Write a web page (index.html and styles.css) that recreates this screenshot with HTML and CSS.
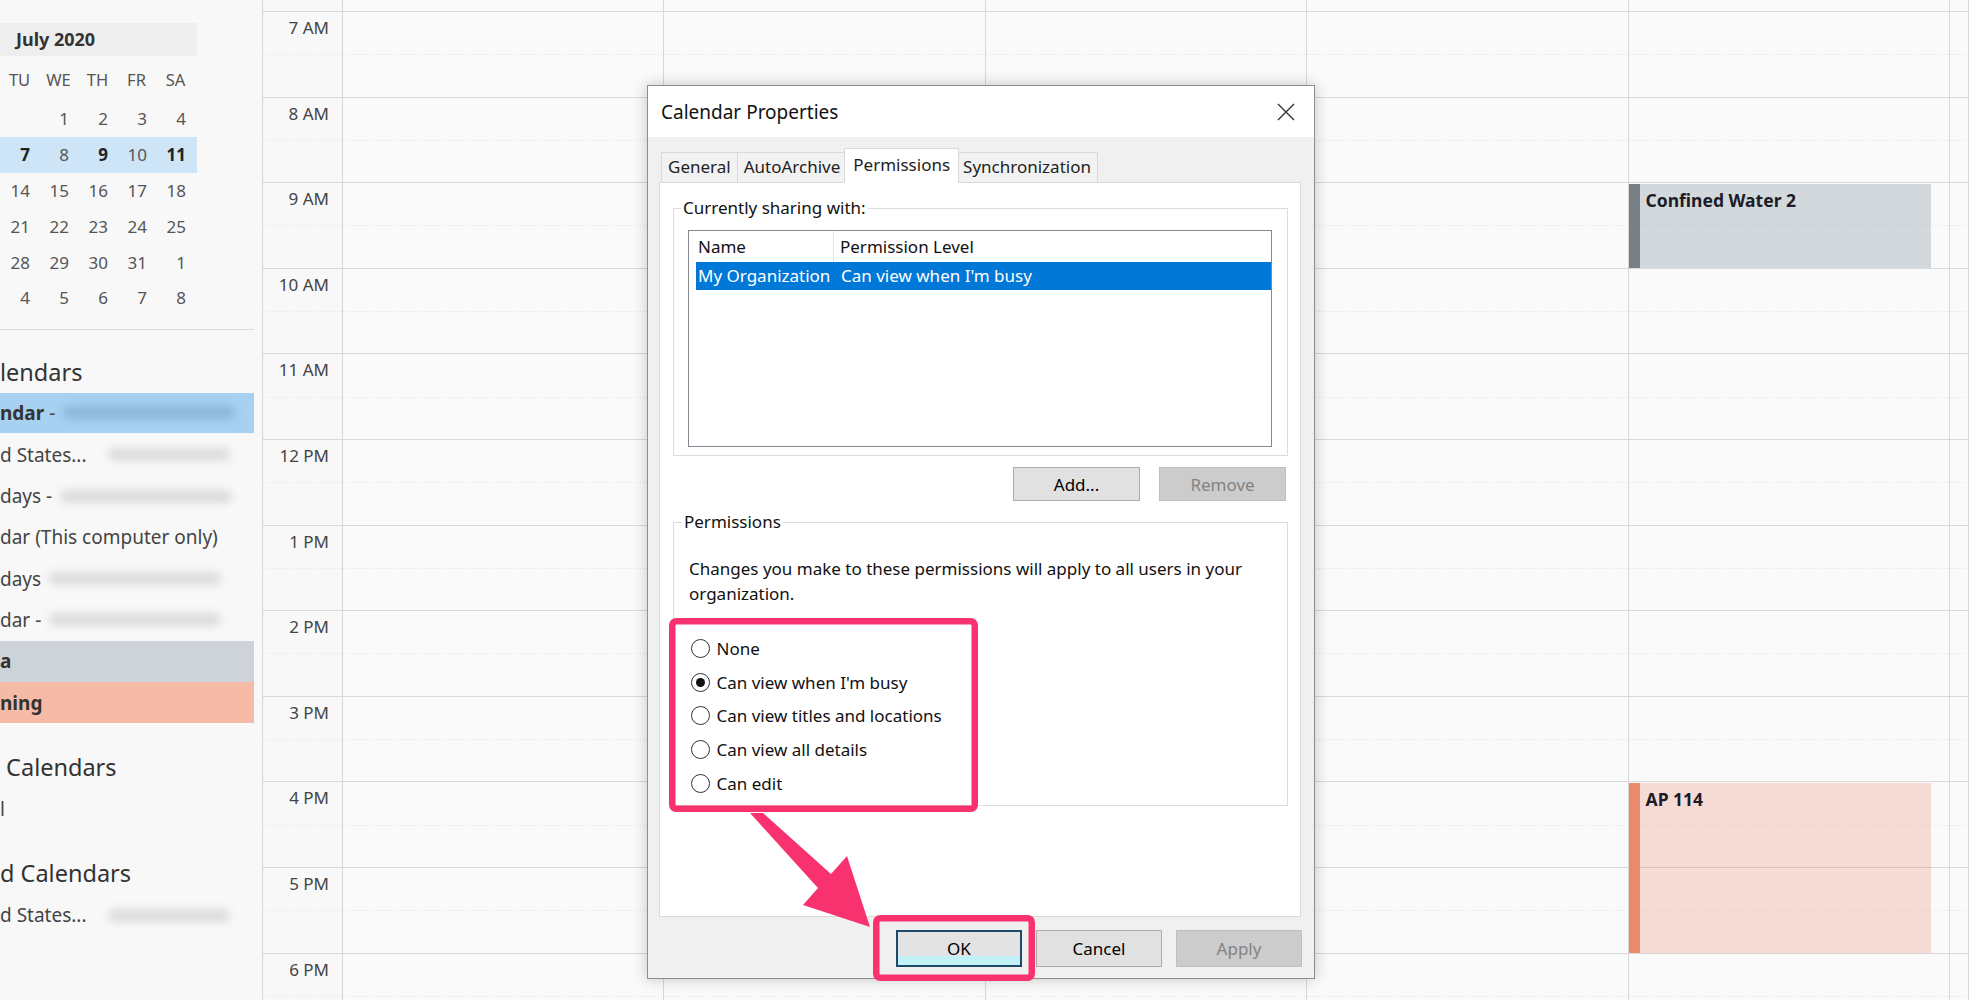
FILE: index.html
```html
<!DOCTYPE html>
<html lang="en">
<head>
    <meta charset="UTF-8">
    <meta name="viewport" content="width=device-width, initial-scale=1.0">
    <title>Calendar - Calendar Properties</title>
    <link rel="stylesheet" href="styles.css">
</head>
<body>
    <div class="app">
        <div class="sidebar">
            <div class="month-title">July 2020</div>
            <div class="month">
                <div class="week dow"><span>TU</span><span>WE</span><span>TH</span><span>FR</span><span>SA</span></div>
                <div class="week"><span></span><span>1</span><span>2</span><span>3</span><span>4</span></div>
                <div class="week current"><span class="busy">7</span><span>8</span><span class="busy">9</span><span>10</span><span class="busy">11</span></div>
                <div class="week"><span>14</span><span>15</span><span>16</span><span>17</span><span>18</span></div>
                <div class="week"><span>21</span><span>22</span><span>23</span><span>24</span><span>25</span></div>
                <div class="week"><span>28</span><span>29</span><span>30</span><span>31</span><span>1</span></div>
                <div class="week"><span>4</span><span>5</span><span>6</span><span>7</span><span>8</span></div>
            </div>
            <div class="sidebar-divider"></div>

            <div class="cal-group">
                <div class="cal-heading">lendars</div>
                <div class="cal-item selected"><b>ndar</b>&nbsp;-<span class="blur"></span></div>
                <div class="cal-item">d States...<span class="blur far"></span></div>
                <div class="cal-item">days -<span class="blur"></span></div>
                <div class="cal-item">dar (This computer only)</div>
                <div class="cal-item">days<span class="blur"></span></div>
                <div class="cal-item">dar -<span class="blur"></span></div>
                <div class="cal-item gray"><b>a</b></div>
                <div class="cal-item salmon"><b>ning</b></div>
            </div>
            <div class="cal-group">
                <div class="cal-heading">&nbsp;Calendars</div>
                <div class="cal-item">l</div>
            </div>
            <div class="cal-group">
                <div class="cal-heading">d Calendars</div>
                <div class="cal-item">d States...<span class="blur far"></span></div>
            </div>
        </div>

        <div class="times" id="times">
            <div class="top-strip"></div>
        </div>

        <div class="days" id="days"></div>
    </div>

    <div class="dialog">
        <div class="dialog-title">
            <span>Calendar Properties</span>
            <svg class="close" width="18" height="18" viewBox="0 0 18 18">
                <path d="M1 1 L17 17 M17 1 L1 17" stroke="#333" stroke-width="1.4" fill="none"/>
            </svg>
        </div>
        <div class="tabs">
            <div class="tab">General</div>
            <div class="tab">AutoArchive</div>
            <div class="tab active">Permissions</div>
            <div class="tab">Synchronization</div>
        </div>
        <div class="tab-panel">
            <fieldset class="group">
                <legend>Currently sharing with:</legend>
                <div class="listview">
                    <div class="lv-header">
                        <div class="lv-col1">Name</div>
                        <div class="lv-col2">Permission Level</div>
                    </div>
                    <div class="lv-row selected">
                        <div class="lv-col1">My Organization</div>
                        <div class="lv-col2">Can view when I'm busy</div>
                    </div>
                </div>
            </fieldset>
            <div class="list-buttons">
                <button class="btn">Add...</button>
                <button class="btn" disabled>Remove</button>
            </div>
            <fieldset class="group perms">
                <legend>Permissions</legend>
                <p class="perm-note">Changes you make to these permissions will apply to all users in your organization.</p>
                <div class="radio-list">
                    <div class="radio"><span class="radio-dot"></span>None</div>
                    <div class="radio checked"><span class="radio-dot"></span>Can view when I'm busy</div>
                    <div class="radio"><span class="radio-dot"></span>Can view titles and locations</div>
                    <div class="radio"><span class="radio-dot"></span>Can view all details</div>
                    <div class="radio"><span class="radio-dot"></span>Can edit</div>
                </div>
            </fieldset>
        </div>
        <div class="dialog-footer">
            <button class="btn default">OK</button>
            <button class="btn">Cancel</button>
            <button class="btn" disabled>Apply</button>
        </div>
    </div>

    <!-- annotation: highlight boxes and arrow -->
    <svg class="callouts" width="1969" height="1000" viewBox="0 0 1969 1000">
        <rect x="672.25" y="621.25" width="302.5" height="187.5" rx="4" fill="none" stroke="#f8326f" stroke-width="6.5"/>
        <rect x="876.25" y="918.25" width="155.5" height="59.5" rx="4" fill="none" stroke="#f8326f" stroke-width="6.5"/>
        <polygon points="750,813 763,813 831,874 847,856 870,927 803,905 818,888" fill="#f8326f"/>
    </svg>

    <script>
        const hours = ['7 AM', '8 AM', '9 AM', '10 AM', '11 AM', '12 PM', '1 PM', '2 PM', '3 PM', '4 PM', '5 PM', '6 PM'];
        const firstHour = 7;
        const hourHeight = 85.6;
        const topOffset = 12;

        const events = [
            { day: 4, start: 9, end: 10, title: 'Confined Water 2', color: 'gray' },
            { day: 4, start: 16, end: 18, title: 'AP 114', color: 'orange' }
        ];

        function buildTimes() {
            const times = document.getElementById('times');
            hours.forEach(label => {
                const div = document.createElement('div');
                div.classList.add('hour');
                div.textContent = label;
                times.appendChild(div);
            });
        }

        function buildDays() {
            const days = document.getElementById('days');
            for (let d = 0; d < 6; d++) {
                const col = document.createElement('div');
                col.classList.add('day');

                const strip = document.createElement('div');
                strip.classList.add('top-strip');
                col.appendChild(strip);

                hours.forEach(() => {
                    const cell = document.createElement('div');
                    cell.classList.add('hour');
                    col.appendChild(cell);
                });

                events.filter(e => e.day === d).forEach(e => {
                    const ev = document.createElement('div');
                    ev.classList.add('event', e.color);
                    ev.style.top = (topOffset + (e.start - firstHour) * hourHeight + 1) + 'px';
                    ev.style.height = ((e.end - e.start) * hourHeight - 2) + 'px';
                    ev.textContent = e.title;
                    col.appendChild(ev);
                });

                days.appendChild(col);
            }
        }

        buildTimes();
        buildDays();
    </script>
</body>
</html>
```

FILE: styles.css
```css
* {
    box-sizing: border-box;
}

body {
    margin: 0;
    width: 1969px;
    height: 1000px;
    overflow: hidden;
    position: relative;
    font-family: 'Noto Sans', 'Open Sans', sans-serif;
    color: #333;
    background-color: #fafafa;
}

.app {
    display: flex;
    height: 1000px;
}

/* sidebar */

.sidebar {
    width: 263px;
    flex-shrink: 0;
    background-color: #f8f8f8;
    border-right: 1px solid #d6d6d6;
    overflow: hidden;
    padding-top: 23px;
}

.month-title {
    width: 197px;
    height: 33px;
    line-height: 33px;
    padding-left: 16px;
    background-color: #eeeeee;
    font-size: 18px;
    font-weight: bold;
    color: #333;
}

.month {
    margin-top: 5px;
    width: 197px;
}

.week {
    display: flex;
    align-items: center;
    height: 35.8px;
}

.week span {
    width: 39px;
    flex-shrink: 0;
    text-align: right;
    padding-right: 9px;
    font-size: 17px;
    color: #555;
}

.week.dow {
    height: 36px;
    margin-bottom: 4px;
}

.week.dow span {
    text-align: center;
    padding-right: 0;
    font-size: 16.5px;
}

.week.current {
    background-color: #cde5f7;
}

.week span.busy {
    font-weight: bold;
    color: #222;
}

.sidebar-divider {
    width: 254px;
    height: 1px;
    background-color: #dadada;
    margin-top: 13px;
}

.cal-group {
    margin-top: 22px;
}

.cal-group + .cal-group {
    margin-top: 24px;
}

.cal-heading {
    height: 41px;
    line-height: 41px;
    font-size: 23.5px;
    color: #333;
    white-space: nowrap;
}

.cal-item {
    width: 254px;
    height: 41.3px;
    display: flex;
    align-items: center;
    font-size: 19px;
    color: #444;
    white-space: nowrap;
}

.cal-item b {
    color: #333;
}

.cal-item.selected {
    background-color: #a7d0f1;
    border-bottom: 1px solid #eef6fc;
}

.cal-item.gray {
    background-color: #cdd3d9;
}

.cal-item.salmon {
    background-color: #f5bba7;
}

.blur {
    display: inline-block;
    width: 172px;
    height: 13px;
    margin-left: 8px;
    border-radius: 6px;
    background-color: rgba(0, 0, 0, 0.11);
    filter: blur(4px);
}

.blur.far {
    width: 122px;
    margin-left: 21px;
}

.cal-item.selected .blur {
    background-color: rgba(40, 80, 120, 0.2);
}

/* day grid */

.times {
    width: 80px;
    flex-shrink: 0;
    border-right: 1px solid #d6d6d6;
    background-color: #f8f8f8;
}

.top-strip {
    height: 12px;
    border-bottom: 1px solid #d9d9d9;
}

.hour {
    height: 85.6px;
    border-bottom: 1px solid #d9d9d9;
    background-image: linear-gradient(to right, #e3e3e3 1px, transparent 1px);
    background-size: 3px 1px;
    background-repeat: repeat-x;
    background-position: 0 42.3px;
}

.times .hour {
    text-align: right;
    padding: 5px 13px 0 0;
    font-size: 17px;
    line-height: 22px;
    color: #444;
}

.days {
    flex: 1;
    display: grid;
    grid-template-columns: repeat(5, 321.4px) 1fr;
}

.day {
    position: relative;
    border-right: 1px solid #d8d8d8;
}

.event {
    position: absolute;
    left: 0;
    width: 302px;
    border-left: 11px solid;
    padding: 5px 0 0 6px;
    font-size: 17.5px;
    font-weight: bold;
    line-height: 22px;
    color: #1c1c28;
}

.event.gray {
    background-color: rgba(120, 140, 150, 0.3);
    border-left-color: #778087;
}

.event.orange {
    background-color: rgba(236, 128, 100, 0.25);
    border-left-color: #e98a6c;
}

/* dialog */

.dialog {
    position: absolute;
    left: 647px;
    top: 85px;
    width: 668px;
    height: 894px;
    background-color: #f0f0f0;
    border: 1px solid #8e8e8e;
    box-shadow: 0 0 14px rgba(0, 0, 0, 0.22);
    font-size: 17px;
    color: #000;
}

.dialog-title {
    height: 51px;
    background-color: #fff;
    display: flex;
    align-items: center;
    justify-content: space-between;
    padding: 0 19px 0 13px;
    font-size: 19px;
    color: #111;
}

.tabs {
    display: flex;
    align-items: flex-end;
    height: 45px;
    padding-left: 14px;
}

.tab {
    height: 30px;
    line-height: 28px;
    padding: 0 6px;
    border: 1px solid #d9d9d9;
    border-bottom: none;
    margin-left: -1px;
    background-color: #f2f2f2;
    color: #222;
}

.tab.active {
    height: 35px;
    line-height: 31px;
    padding: 0 8px;
    margin: 0 -2px -1px -3px;
    background-color: #fff;
    position: relative;
    z-index: 1;
}

.tab-panel {
    margin-left: 11px;
    width: 642px;
    height: 735px;
    background-color: #fff;
    border: 1px solid #d9d9d9;
    padding: 13px 12px 0 13px;
}

.group {
    margin: 0;
    border: 1px solid #dcdcdc;
    padding: 10px 15px 8px 14px;
}

.group legend {
    margin-left: -7px;
    padding: 0 2px;
    line-height: 24px;
    color: #111;
}

.listview {
    height: 217px;
    border: 1px solid #828790;
    background-color: #fff;
}

.lv-header {
    display: flex;
    height: 31px;
    line-height: 31px;
    color: #111;
}

.lv-header .lv-col1 {
    width: 145px;
    padding-left: 9px;
    border-right: 1px solid #e5e5e5;
}

.lv-header .lv-col2 {
    padding-left: 6px;
}

.lv-row {
    display: flex;
    height: 28px;
    line-height: 28px;
    margin-left: 7px;
}

.lv-row .lv-col1 {
    width: 143px;
    padding-left: 2px;
    white-space: nowrap;
}

.lv-row .lv-col2 {
    padding-left: 2px;
}

.lv-row.selected {
    background-color: #0078d7;
    color: #fff;
}

.list-buttons {
    display: flex;
    justify-content: flex-end;
    gap: 19px;
    margin: 11px 2px 9px 0;
}

.btn {
    width: 127px;
    height: 34px;
    background-color: #e1e1e1;
    border: 1px solid #adadad;
    font-family: 'Noto Sans', 'Open Sans', sans-serif;
    font-size: 17px;
    color: #000;
    padding: 0;
}

.btn:disabled {
    background-color: #cccccc;
    border-color: #bfbfbf;
    color: #838383;
}

.group.perms {
    padding: 22px 15px 5px 15px;
}

.perm-note {
    margin: 0;
    line-height: 25px;
    color: #111;
}

.radio-list {
    margin-top: 25.5px;
}

.radio {
    display: flex;
    align-items: center;
    height: 33.7px;
    color: #111;
}

.radio-dot {
    width: 19px;
    height: 19px;
    flex-shrink: 0;
    border: 1.4px solid #333;
    border-radius: 50%;
    margin: 0 7px 0 1.5px;
    display: flex;
    align-items: center;
    justify-content: center;
}

.radio.checked .radio-dot::after {
    content: '';
    width: 9px;
    height: 9px;
    border-radius: 50%;
    background-color: #111;
}

.dialog-footer {
    display: flex;
    justify-content: flex-end;
    gap: 14px;
    padding: 13px 12px 0 0;
}

.dialog-footer .btn {
    width: 126px;
    height: 37px;
}

.btn.default {
    border: 2px solid #1d4a6b;
    background: linear-gradient(#e3e3e3 0, #e3e3e3 72%, #c2f1f7 72%);
}

.callouts {
    position: absolute;
    left: 0;
    top: 0;
    pointer-events: none;
}
```
